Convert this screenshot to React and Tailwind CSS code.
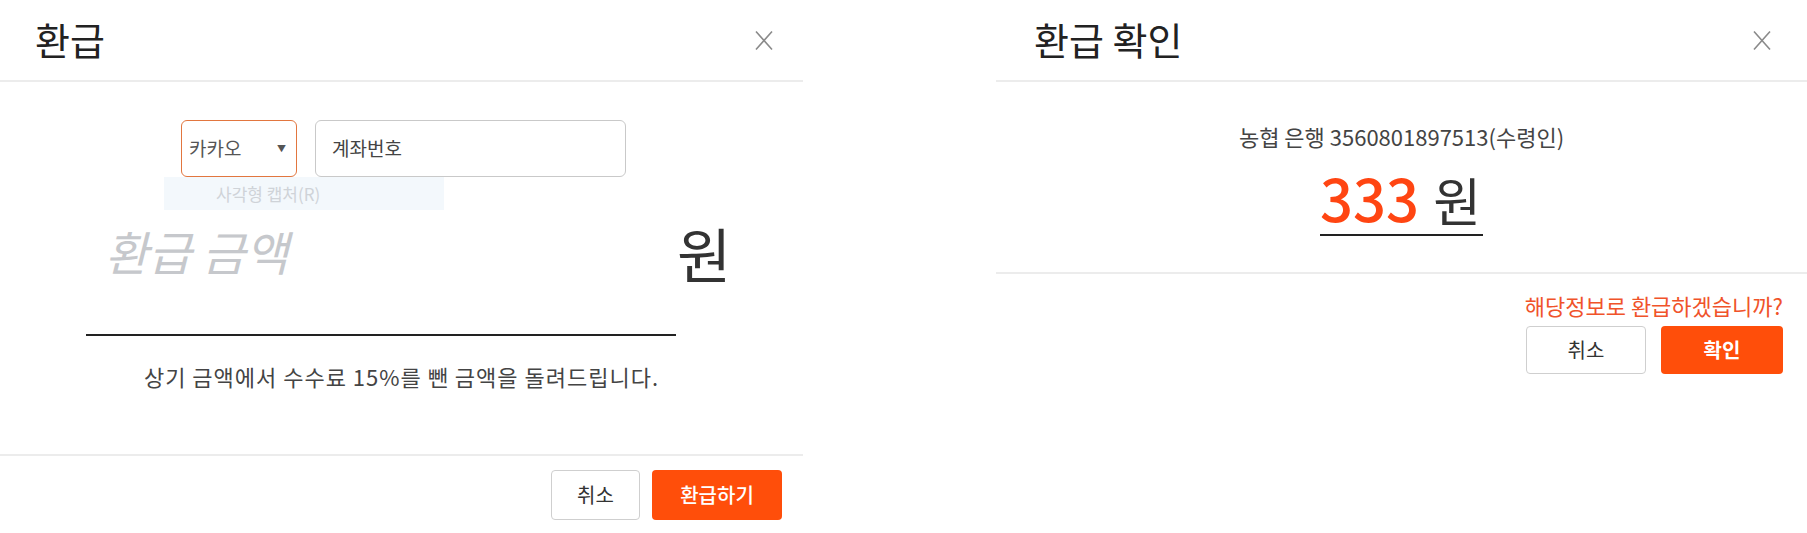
import React from 'react';

// Thin "X" used in both dialog headers
const CloseIcon = () => (
  <svg width="20" height="21" viewBox="0 0 20 21" fill="none">
    <path d="M2 1.5 L18 19.5 M18 1.5 L2 19.5" stroke="#8a8a8a" strokeWidth="1.6" />
  </svg>
);

const DialogHeader = ({ title, padLeft }) => (
  <div className={`flex h-[82px] items-center justify-between border-b-2 border-[#ececec] ${padLeft}`}>
    <h2 className="text-[38px] leading-none text-[#222] -mt-[3px]">{title}</h2>
    <CloseIcon />
  </div>
);

/**
 * RefundDialog
 * bank select + account number + amount input
 */
const RefundDialog = () => (
  <div className="flex w-[803px] flex-col bg-white">
    <DialogHeader title="환급" padLeft="pl-[35px] pr-[29px]" />

    <div className="flex h-[372px] flex-col">
      {/* bank / account row */}
      <div className="mt-[38px] flex gap-[18px] pl-[181px]">
        <div className="flex h-[57px] w-[116px] items-center justify-between rounded-[6px] border border-[#e2763f] pl-[7px] pr-[10px]">
          <span className="text-[19px] text-[#555]">카카오</span>
          <span className="text-[9px] text-[#555]">▼</span>
        </div>
        <div className="flex h-[57px] w-[311px] items-center rounded-[6px] border border-[#c9c9c9] px-[16px]">
          <span className="text-[19px] text-[#444]">계좌번호</span>
        </div>
      </div>

      {/* leftover capture tooltip */}
      <div className="ml-[164px] flex h-[33px] w-[280px] items-center bg-[#f3f8fc] pl-[52px]">
        <span className="text-[17px] text-[#cfd3d8]">사각형 캡처(R)</span>
      </div>

      {/* amount */}
      <div className="mt-[14px] flex items-start pl-[86px]">
        <div className="h-[112px] w-[590px] border-b-2 border-[#222] pl-[19px] pt-[3px]">
          <span className="text-[47px] italic leading-none text-[#c6c8cc]">환급 금액</span>
        </div>
        <span className="ml-[1px] -mt-[1px] text-[59px] leading-none text-[#333]">원</span>
      </div>

      <p className="mt-[29px] text-center text-[22px] leading-none tracking-[1px] text-[#444]">
        상기 금액에서 수수료 15%를 뺀 금액을 돌려드립니다.
      </p>
    </div>

    <div className="flex justify-end gap-[12px] border-t-2 border-[#ececec] pt-[14px] pr-[21px]">
      <button className="h-[50px] w-[89px] rounded-[4px] border border-[#cfcfcf] bg-white text-[20px] text-[#333]">
        취소
      </button>
      <button className="h-[50px] w-[130px] rounded-[4px] bg-[#ff4e0a] text-[20px] font-medium text-white">
        환급하기
      </button>
    </div>
  </div>
);

/**
 * RefundConfirmDialog
 * shows account + amount before submitting
 */
const RefundConfirmDialog = ({ bank, account, amount }) => (
  <div className="flex w-[811px] flex-col bg-white">
    <DialogHeader title="환급 확인" padLeft="pl-[38px] pr-[35px]" />

    <div className="flex h-[192px] flex-col items-center border-b-2 border-[#ececec]">
      <p className="mt-[43px] text-[22px] leading-none text-[#444]">
        {bank} 은행 {account}(수령인)
      </p>
      <div className="mt-[21px] border-b-2 border-[#222] pb-[7px] pr-[2px]">
        <span className="text-[58px] font-medium leading-none text-[#ff4512]">{amount}</span>
        <span className="ml-[14px] text-[52px] leading-none text-[#333]">원</span>
      </div>
    </div>

    <div className="flex flex-col items-end pr-[24px]">
      <p className="mt-[20px] text-[22px] leading-none text-[#f0532a]">해당정보로 환급하겠습니까?</p>
      <div className="mt-[10px] flex gap-[15px]">
        <button className="h-[48px] w-[120px] rounded-[4px] border border-[#cfcfcf] bg-white text-[20px] text-[#333]">
          취소
        </button>
        <button className="h-[48px] w-[122px] rounded-[4px] bg-[#ff4e0a] text-[20px] font-bold text-white">
          확인
        </button>
      </div>
    </div>
  </div>
);

export default function App() {
  return (
    <div className="flex h-[533px] w-[1807px] justify-between overflow-hidden bg-white font-['Noto_Sans_CJK_KR',sans-serif]">
      <RefundDialog />
      <RefundConfirmDialog bank="농협" account="3560801897513" amount="333" />
    </div>
  );
}
